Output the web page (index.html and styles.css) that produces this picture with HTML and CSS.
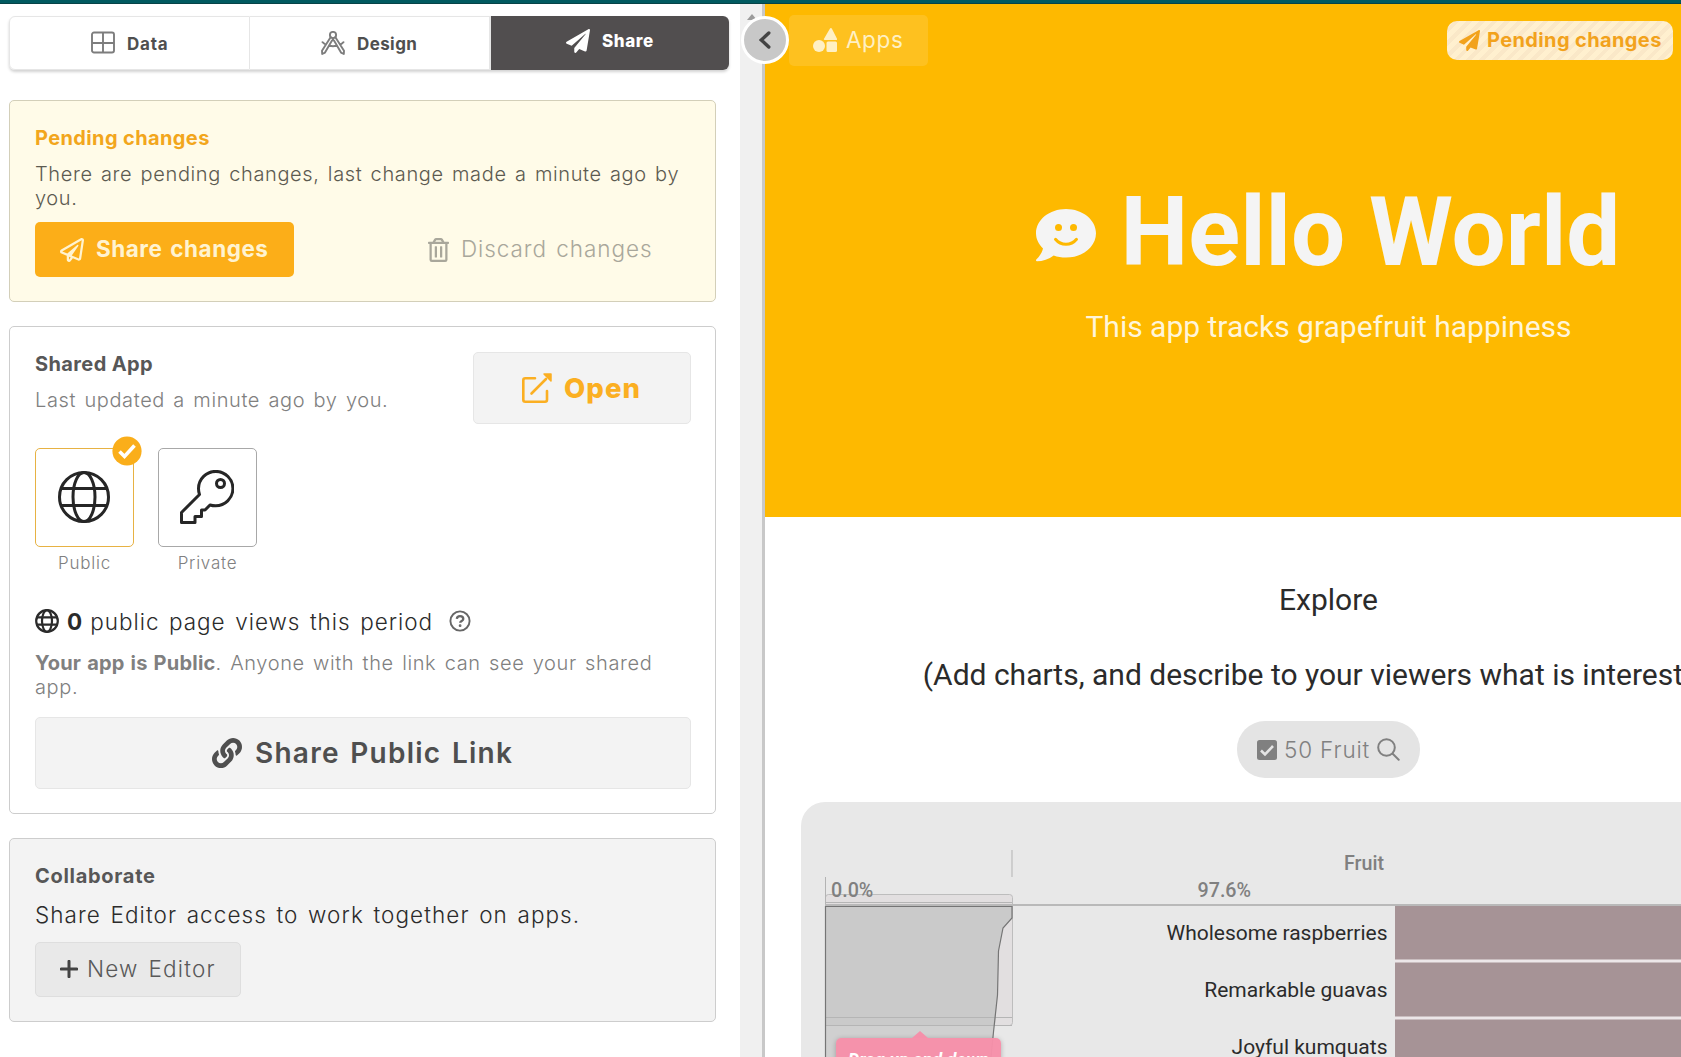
FILE: index.html
```html
<!DOCTYPE html>
<html lang="en">
<head>
<meta charset="utf-8">
<title>Hello World – Share</title>
<link rel="stylesheet" href="styles.css">
</head>
<body>
<svg class="sprite" aria-hidden="true">
  <symbol id="plane" viewBox="0 0 512 512"><path d="M476 3.2L12.5 270.6c-18.1 10.4-15.8 35.6 2.2 43.2L121 358.4l287.3-253.2c5.5-4.9 13.3 2.6 8.6 8.3L176 407v80.5c0 23.6 28.5 32.9 42.5 15.8L282 426l124.6 52.2c14.2 6 30.4-2.9 33-18.2l72-432C515 7.8 493.3-6.8 476 3.2z"/></symbol>
  <symbol id="globe" viewBox="0 0 52 52"><g fill="none" stroke="currentColor" stroke-width="3"><circle cx="26" cy="26" r="24.5"/><ellipse cx="26" cy="26" rx="11" ry="24.5"/><path d="M3 17.5h46M3 34.5h46"/></g></symbol>
</svg>
<div class="topbar"></div>
<div class="app">
  <aside class="panel">
    <nav class="tabs">
      <a class="tab tab-data"><svg class="i-tab" viewBox="0 0 24 24" fill="none" stroke="currentColor" stroke-width="1.9"><rect x="1" y="1.500" width="22" height="20" rx="2"/><path d="M12 1.500v20M1 12h22"/></svg><span>Data</span></a>
      <a class="tab tab-design"><svg class="i-tab" viewBox="0 0 24 24" fill="none" stroke="currentColor" stroke-width="1.9" stroke-linejoin="round" stroke-linecap="round"><circle cx="12" cy="4" r="3.1"/><path d="M9.600 6.200 1 19.800l.2 3.200 2.800-1.400L11 9.500M14.400 6.200 23 19.800l-.2 3.200-2.800-1.400L13 9.500M1.500 11.200c1 1 2 1.800 3.100 2.300M8.500 14.800c2.300.5 4.700.5 7 0M19.400 13.500c1.200-.5 2.200-1.300 3.100-2.300M12 7.300v2"/></svg><span>Design</span></a>
      <a class="tab tab-share active"><svg class="i-tab" fill="currentColor"><use href="#plane"/></svg><span>Share</span></a>
    </nav>

    <section class="card pending">
      <h3>Pending changes</h3>
      <p class="note">There are pending changes, last change made a minute ago by you.</p>
      <div class="actions">
        <button class="btn primary"><svg class="i24" viewBox="0 0 512 512" fill="currentColor"><path d="M440 6.500L24 246.400c-34.400 19.900-31.100 70.800 5.700 85.900L144 379.600V464c0 46.400 59.200 65.500 86.600 28.600l43.800-59.100 111.900 46.200c5.900 2.400 12.100 3.600 18.300 3.600 8.200 0 16.300-2.100 23.600-6.200 12.800-7.200 21.600-20 23.900-34.500l59.400-387.200c6.100-40.100-36.900-68.800-71.500-48.900zM192 464v-64.600l36.600 15.100L192 464zm212.600-28.700l-153.800-63.500L391 169.500c10.700-15.500-9.500-33.500-23.700-21.200L155.800 332.600 48 288 464 48l-59.400 387.300z"/></svg><span>Share changes</span></button>
        <button class="btn ghost"><svg class="i-trash" viewBox="0 0 448 512" fill="currentColor"><path d="M268 416h24a12 12 0 0 0 12-12V188a12 12 0 0 0-12-12h-24a12 12 0 0 0-12 12v216a12 12 0 0 0 12 12zM432 80h-82.410l-34-56.700A48 48 0 0 0 274.410 0H173.590a48 48 0 0 0-41.160 23.300L98.410 80H16A16 16 0 0 0 0 96v16a16 16 0 0 0 16 16h16v336a48 48 0 0 0 48 48h288a48 48 0 0 0 48-48V128h16a16 16 0 0 0 16-16V96a16 16 0 0 0-16-16zM171.840 50.910A6 6 0 0 1 177 48h94a6 6 0 0 1 5.150 2.910L293.610 80H154.390zM368 464H80V128h288zm-212-48h24a12 12 0 0 0 12-12V188a12 12 0 0 0-12-12h-24a12 12 0 0 0-12 12v216a12 12 0 0 0 12 12z"/></svg><span>Discard changes</span></button>
      </div>
    </section>

    <section class="card shared">
      <header class="shared-head">
        <div>
          <h3>Shared App</h3>
          <p class="note">Last updated a minute ago by you.</p>
        </div>
        <button class="btn open"><svg class="i30" viewBox="0 0 30 30" fill="none" stroke="currentColor" stroke-width="2.600" stroke-linecap="round" stroke-linejoin="round"><path d="M13 5.300H3.300a2 2 0 0 0-2 2v19.400a2 2 0 0 0 2 2H23a2 2 0 0 0 2-2V18M9.500 20.500 24 6"/><path d="M22 1h7v7z" fill="currentColor" stroke-width="1.500"/></svg><span>Open</span></button>
      </header>
      <div class="tiles">
        <div class="choice">
          <div class="tile on"><svg class="i52"><use href="#globe"/></svg>
            <svg class="tick" viewBox="0 0 30 30"><circle cx="15" cy="15" r="14.600" fill="#faae1a"/><path d="m7.500 15.500 5 5 10-11" fill="none" stroke="#fff" stroke-width="3.600"/></svg></div>
          <span>Public</span>
        </div>
        <div class="choice">
          <div class="tile"><svg class="i54" viewBox="0 0 54 54" fill="none" stroke="currentColor" stroke-width="3" stroke-linejoin="round"><path d="M19.500 24.500 1.500 42.500v10H15v-6h6.500V40H25l5-5c1.700.5 3.500.8 5.500.8A17.200 17.200 0 1 0 18.500 18.500c0 2.100.3 4.200 1 6z"/><circle cx="40.500" cy="13.500" r="4"/></svg></div>
          <span>Private</span>
        </div>
      </div>
      <div class="views"><svg class="i24" viewBox="0 0 24 24" fill="none" stroke="currentColor" stroke-width="2.200"><circle cx="12" cy="12" r="10.800"/><ellipse cx="12" cy="12" rx="5" ry="10.800"/><path d="M2 8.400h20M2 15.600h20"/></svg><b>0</b><span>public page views this period</span><svg class="i-help" viewBox="0 0 22 22" fill="none" stroke="currentColor" stroke-width="1.900"><circle cx="11" cy="11" r="9.600"/><path d="M7.800 8.800c.2-1.700 1.500-2.600 3.200-2.600 1.800 0 3.300 1 3.300 2.700 0 2-3.100 2-3.100 3.800" stroke-width="2.300"/><circle cx="11.100" cy="15.700" r=".6" stroke-width="1.600"/></svg></div>
      <p class="note about"><b>Your app is Public</b>. Anyone with the link can see your shared app.</p>
      <button class="btn link"><svg class="i30" viewBox="0 0 512 512" fill="currentColor"><path d="M326.612 185.391c59.747 59.809 58.927 155.698.36 214.590-.11.12-.24.25-.36.37l-67.200 67.200c-59.270 59.270-155.699 59.262-214.960 0-59.270-59.260-59.270-155.700 0-214.960l37.106-37.106c9.840-9.840 26.786-3.300 27.294 10.606.648 17.722 3.826 35.527 9.690 52.721 1.986 5.822.567 12.262-3.783 16.612l-13.087 13.087c-28.026 28.026-28.905 73.660-1.155 101.960 28.024 28.579 74.086 28.749 102.325.51l67.200-67.190c28.191-28.191 28.073-73.757 0-101.830-3.701-3.694-7.429-6.564-10.341-8.569a16.037 16.037 0 0 1-6.947-12.606c-.396-10.567 3.348-21.456 11.698-29.806l21.054-21.055c5.521-5.521 14.182-6.199 20.584-1.731a152.482 152.482 0 0 1 20.522 17.197zM467.547 44.449c-59.261-59.262-155.690-59.270-214.960 0l-67.200 67.200c-.12.12-.25.25-.36.37-58.566 58.892-59.387 154.781.36 214.590a152.454 152.454 0 0 0 20.521 17.196c6.402 4.468 15.064 3.789 20.584-1.731l21.054-21.055c8.350-8.350 12.094-19.239 11.698-29.806a16.037 16.037 0 0 0-6.947-12.606c-2.912-2.005-6.640-4.875-10.341-8.569-28.073-28.073-28.191-73.639 0-101.830l67.200-67.190c28.239-28.239 74.300-28.069 102.325.51 27.750 28.300 26.872 73.934-1.155 101.960l-13.087 13.087c-4.350 4.350-5.769 10.790-3.783 16.612 5.864 17.194 9.042 34.999 9.690 52.721.509 13.906 17.454 20.446 27.294 10.606l37.106-37.106c59.271-59.259 59.271-155.699.001-214.959z"/></svg><span>Share Public Link</span></button>
    </section>

    <section class="card collab">
      <h3>Collaborate</h3>
      <p>Share Editor access to work together on apps.</p>
      <button class="btn editor"><svg class="i-plus" viewBox="0 0 18 18" stroke="currentColor" stroke-width="3" stroke-linecap="round"><path d="M9 1.300v15.400M1.300 9h15.400"/></svg><span>New Editor</span></button>
    </section>
  </aside>

  <div class="scrollbar"><i></i></div>

  <main class="preview">
    <button class="collapse"><svg viewBox="0 0 12 18" fill="none" stroke="#444" stroke-width="3.400" stroke-linecap="round"><path d="M9.800 2 2.300 9l7.500 7"/></svg></button>
    <div class="toolbar">
      <button class="apps"><svg class="i24" viewBox="0 0 24 24" fill="currentColor"><circle cx="6" cy="18" r="6"/><rect x="13.500" y="13.500" width="10.500" height="10.500" rx="1.500"/><path d="M17 .6a1 1 0 0 1 1.800 0L24 10.700a.9.900 0 0 1-.8 1.300H11.800a.9.900 0 0 1-.8-1.300z"/></svg><span>Apps</span></button>
      <span class="badge"><svg class="i21" fill="currentColor"><use href="#plane"/></svg><span>Pending changes</span></span>
    </div>
    <div class="page">
      <section class="hero">
        <h1><svg class="smile" viewBox="0 0 60 53"><path fill="currentColor" d="M30 0c16.600 0 30 10.900 30 24.300S46.600 48.600 30 48.600c-4.400 0-8.600-.7-12.300-2.100C13 50.200 6.500 52.300 1 52.300c-1 0-1.300-1-.7-1.700C3.500 47.300 6 43.600 7 39.400 2.600 35.200 0 30 0 24.300 0 10.900 13.400 0 30 0z"/><g class="cut"><circle cx="22.500" cy="18.500" r="3.500"/><circle cx="37.500" cy="18.500" r="3.500"/></g><path d="M19.500 30.300c5.500 6.700 15.500 6.700 21 0" fill="none" stroke="#feb900" stroke-width="3" stroke-linecap="round"/></svg><span>Hello World</span></h1>
        <p>This app tracks grapefruit happiness</p>
      </section>
      <section class="explore">
        <p>Explore</p>
        <p>(Add charts, and describe to your viewers what is interesting)</p>
        <div class="pill"><svg class="i-check" viewBox="0 0 20 20"><rect width="20" height="20" rx="2.500" fill="currentColor"/><path d="m4 10.500 4 4 8-8.500" fill="none" stroke="#e4e4e4" stroke-width="2.600"/></svg><span>50 Fruit</span><svg class="i-search" viewBox="0 0 23 23" fill="none" stroke="currentColor" stroke-width="2" stroke-linecap="round"><circle cx="9.500" cy="9.500" r="8.300"/><path d="m15.700 15.700 6 6"/></svg></div>
      </section>
      <section class="chart">
        <svg width="1056" height="300" viewBox="801 802 1056 300">
          <rect x="825.500" y="894.500" width="187" height="131" rx="3" fill="#e2dfe0" stroke="#bdbdbd"/>
          <path d="M825.500 906H1012v12l-9 10-4.500 23-1 44-4 37-3 30H825.500z" fill="#000" fill-opacity=".1"/>
          <path d="M825.500 906H1012v12l-9 10-4.500 23-1 44-2.500 30H825.500z" fill="#cacaca"/>
          <path d="M825 902.500h187M825 1017.500h187M825 1025.500h187" stroke="#b5b5b5"/>
          <path d="M825.500 877v29M1012 850v27" stroke="#b3b3b3"/>
          <path d="M825 905h1032" stroke="#b9b9b9" stroke-width="2"/>
          <path d="M825.500 1100V906.500H1012V918l-9 10-4.500 23-1 44-4 37-3 30" fill="none" stroke="#757575" stroke-width="1.200"/>
          <rect x="1395" y="906" width="462" height="190" fill="#ece6e8"/>
          <g fill="#a69396"><rect x="1395" y="906" width="462" height="53"/><rect x="1395" y="963" width="462" height="53"/><rect x="1395" y="1020" width="462" height="53"/></g>
          <path d="M1395 959.500h462M1395 962.500h462M1395 1016.500h462M1395 1019.500h462" stroke="#c9bdbf"/>
          <g class="axis"><text x="831" y="897">0.0%</text><text x="1197.500" y="897">97.6%</text><text x="1344" y="870">Fruit</text></g>
          <g class="names"><text x="1387.500" y="940">Wholesome raspberries</text><text x="1387.500" y="997">Remarkable guavas</text><text x="1387.500" y="1054">Joyful kumquats</text></g>
        </svg>
        <div class="hint">Drag up and down</div>
      </section>
    </div>
  </main>
</div>
</body>
</html>
```
FILE: styles.css
```css
* { box-sizing: border-box; }
body { margin: 0; height: 1057px; overflow: hidden; background: #fff; color: #2b2b2b; font-family: Inter, "Liberation Sans", sans-serif; }
h1, h3, p { margin: 0; }
button { margin: 0; border: 0; padding: 0; font: inherit; color: inherit; background: none; }
svg { display: block; flex: none; }
.sprite { display: none; }

.topbar { height: 4px; background: #005a60; border-bottom: 1px solid #064347; }
.app { display: flex; height: 1053px; overflow: hidden; }
.panel { flex: none; width: 740px; padding: 12px 11px 0 9px; background: #fff; }
.scrollbar { flex: none; width: 22px; background: #f0f0f0; padding: 10px 0 0 7px; }
.scrollbar i { display: block; width: 0; border: 5px solid transparent; border-top: 0; border-bottom: 6px solid #9b9b9b; }

.tabs { display: grid; grid-template-columns: 241px 241px 238px; height: 54px; border-radius: 6px; box-shadow: 0 2px 3px rgba(0,0,0,.18); font-weight: 700; font-size: 17px; color: #4f4f4f; }
.tab { display: flex; align-items: center; border: 1px solid #e6e6e6; border-left: 0; }
.tab svg { color: #7d7d7d; }
.tab span { padding-top: 1px; }
.tab-data { padding-left: 81px; gap: 12px; border-left: 1px solid #e6e6e6; border-radius: 6px 0 0 6px; letter-spacing: .8px; }
.tab-design { padding-left: 71px; gap: 12px; border-right-width: 2px; letter-spacing: .4px; }
.tab-share { padding: 0 0 5px 75px; gap: 12px; font-weight: 800; letter-spacing: .6px; }
.tab.active { background: #514e4f; border: 0; border-radius: 0 6px 6px 0; color: #fff; }
.tab.active svg { color: #fff; }
.i-tab, .i24 { width: 24px; height: 24px; }
.i30 { width: 30px; height: 30px; }
.i21 { width: 21px; height: 21px; }
.i52 { width: 52px; height: 52px; }
.i54 { width: 54px; height: 54px; }

.card { width: 707px; border: 1px solid #cdcdcd; border-radius: 5px; padding: 25px 24px 25px 25px; }
.card h3 { font-size: 20px; line-height: 24px; font-weight: 700; letter-spacing: .38px; color: #575757; }
.note { margin-top: 12px; font-size: 20px; line-height: 24px; font-weight: 300; letter-spacing: .62px; word-spacing: 2.1px; color: #808080; }
.pending { margin-top: 30px; height: 202px; background: #fffbe8; border-color: #d3cfb9; }
.card.pending h3 { color: #f2a61c; }
.pending .note { color: #5c5a50; }
.actions { display: flex; margin-top: 12px; }
.btn { display: flex; align-items: center; border-radius: 5px; white-space: nowrap; word-spacing: 2.2px; }
.btn span { padding-bottom: 2px; }
.primary { width: 259px; height: 55px; padding-left: 25px; gap: 12px; background: #fcae18; color: #fff3d0; font-size: 22.5px; font-weight: 700; letter-spacing: .5px; }
.ghost { margin-left: 134px; gap: 12px; color: #a9a79b; font-size: 22.5px; font-weight: 300; letter-spacing: .92px; }
.i-trash { width: 21px; height: 24px; }

.shared { margin-top: 24px; height: 488px; }
.shared-head { display: flex; justify-content: space-between; height: 72px; }
.open { width: 218px; height: 72px; border: 1px solid #e6e6e6; padding-left: 48px; gap: 12px; background: #f3f3f3; color: #fbaf22; font-size: 27.5px; font-weight: 800; letter-spacing: 1.1px; }
.btn.open span, .btn.link span { padding-bottom: 1px; }
.tiles { display: flex; gap: 24px; margin-top: 24px; }
.choice { width: 99px; display: flex; flex-direction: column; align-items: center; gap: 4px; font-size: 17px; line-height: 24px; font-weight: 300; letter-spacing: .75px; color: #808080; }
.tile { position: relative; width: 99px; height: 99px; display: grid; place-items: center; padding: 0 2px 1px 0; border: 1px solid #a8a8a8; border-radius: 5px; color: #262626; }
.tile.on { border-color: #e7b243; }
.tick { position: absolute; right: -9px; top: -13px; width: 30px; height: 30px; }
.views { display: flex; align-items: center; height: 28px; margin-top: 32px; font-size: 22.5px; font-weight: 300; letter-spacing: .98px; word-spacing: 2.2px; }
.views b { font-weight: 700; margin: 0 8px 0 8px; letter-spacing: 0; }
.i-help { width: 22px; height: 22px; margin-left: 16px; color: #666; }
.about { margin-top: 16px; }
.about b { font-weight: 700; letter-spacing: .22px; word-spacing: 1px; }
.link { width: 656px; height: 72px; margin-top: 18px; border: 1px solid #e6e6e6; padding-left: 176px; gap: 13px; background: #f3f3f3; color: #4f4f4f; font-size: 28px; font-weight: 600; letter-spacing: 1.25px; }

.collab { margin-top: 24px; height: 184px; background: #f3f3f3; }
.collab h3 { letter-spacing: .7px; }
.collab p { margin: 13px 0; font-size: 22.5px; line-height: 28px; font-weight: 300; letter-spacing: 1.07px; word-spacing: 2.2px; }
.editor { width: 206px; height: 55px; border: 1px solid #dedede; padding-left: 24px; gap: 9px; background: #e9e9e9; color: #595959; font-size: 22.5px; font-weight: 300; letter-spacing: 1.2px; }
.editor svg { margin-bottom: 2px; }
.i-plus { width: 18px; height: 18px; color: #444; }

.preview { position: relative; flex: 1; min-width: 0; border-left: 3px solid #c8c8c8; }
.collapse { position: absolute; left: -24px; top: 12px; z-index: 3; width: 48px; height: 48px; border: 3px solid #fff; border-radius: 50%; background: #c8c8c8; display: grid; place-items: center; }
.collapse svg { width: 12px; height: 18px; }
.toolbar { position: absolute; z-index: 2; inset: 11px 8px auto 24px; display: flex; justify-content: space-between; }
.apps { display: flex; align-items: center; width: 139px; height: 51px; padding: 0 0 2px 24px; gap: 9px; border-radius: 5px; background: rgba(255,255,255,.12); color: #fff0c4; font-size: 22.5px; letter-spacing: .6px; }
.badge { display: flex; align-items: center; width: 226px; height: 39px; margin-top: 6px; padding: 0 0 1px 12px; gap: 7px; border-radius: 10px; background: repeating-linear-gradient(135deg, #fff0cf 0 5px, #fae8c8 5px 9px); color: #f2a21c; font-size: 20px; font-weight: 700; letter-spacing: .38px; }
.page { width: 1127px; font-family: Roboto, sans-serif; }
.hero { height: 513px; padding-top: 170px; background: #feb900; text-align: center; color: #fff5da; }
.hero h1 { display: flex; justify-content: center; gap: 25px; margin-left: -1px; color: #f4f4f4; font-size: 96px; line-height: 116px; font-weight: 700; }
.smile { width: 60px; height: 53px; margin-top: 35px; }
.cut { fill: #feb900; }
.hero p { margin-top: 17px; font-size: 30px; line-height: 40px; }
.explore { padding-top: 63px; text-align: center; font-size: 30px; line-height: 40px; }
.explore p { white-space: nowrap; }
.explore p + p { margin-top: 35px; }
.pill { display: flex; align-items: center; width: 183px; height: 57px; margin: 26px auto 0; padding-left: 20px; border-radius: 28px; background: #e4e4e4; color: #808080; font: 300 22.5px Inter, sans-serif; letter-spacing: .85px; }
.i-check { width: 20px; height: 20px; margin-right: 7px; }
.i-search { width: 23px; height: 23px; margin-left: 7px; }
.chart { position: relative; width: 1056px; height: 300px; margin: 24px 0 0 36px; border-radius: 24px; background: #e8e8e8; overflow: hidden; }
.axis { font: 500 19.7px Roboto, sans-serif; fill: #808080; }
.names { font: 400 21px Roboto, sans-serif; fill: #2b2b2b; text-anchor: end; }
.hint { position: absolute; left: 35px; top: 236px; width: 165px; height: 60px; padding: 10px 12px; border-radius: 5px; background: rgba(247,144,170,.96); box-shadow: 0 1px 5px rgba(0,0,0,.25); color: #fff; font: italic 700 18px/24px Roboto, sans-serif; white-space: nowrap; }
.hint::before { content: ""; position: absolute; left: 76px; top: -7px; border: 8px solid transparent; border-top: 0; border-bottom: 7px solid #f590aa; }
```
